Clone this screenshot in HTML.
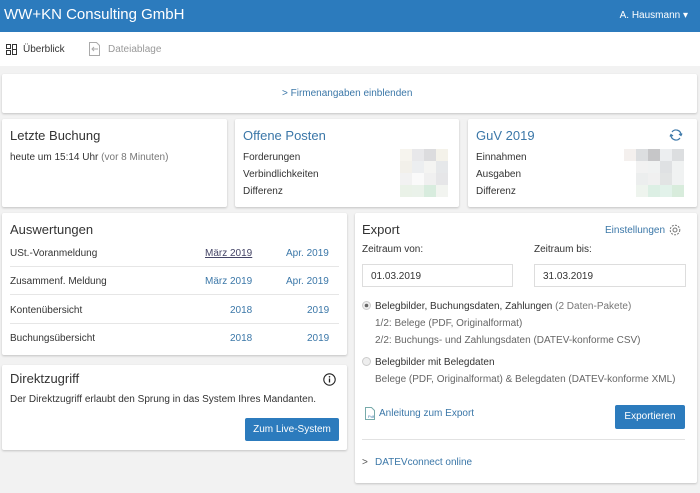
<!DOCTYPE html>
<html><head><meta charset="utf-8"><style>
*{box-sizing:border-box;margin:0;padding:0}
body{width:700px;height:493px;background:#f2f2f2;font-family:"Liberation Sans",sans-serif;font-size:10px;color:#333;position:relative;overflow:hidden}
.hdr{position:absolute;left:0;top:0;width:700px;height:32px;background:#2c7bbd;color:#fff}
.hdr .t{position:absolute;left:4px;top:6px;font-size:15px}
.hdr .u{position:absolute;right:12px;top:10px;font-size:10px}
.nav{position:absolute;left:0;top:32px;width:700px;height:34px;background:#fff}
.card{position:absolute;background:#fff;box-shadow:0 1px 2px rgba(0,0,0,.2);border-radius:2px}
.h{font-size:13px;color:#333;position:absolute}
.blue{color:#3b77a8}
.l{position:absolute;font-size:10px}
.row{position:absolute;left:8px;right:8px;height:28px;border-bottom:1px solid #e6e6e6;font-size:10px}
.row span{position:absolute;top:9px}
.btn{position:absolute;background:#2c7bbd;color:#fff;font-size:10px;border-radius:2px;text-align:center}
.inp{position:absolute;border:1px solid #ddd;height:23px;font-size:10px;padding:6px 8px;color:#333}
.px{position:absolute;display:grid;grid-template-columns:repeat(4,12px);grid-auto-rows:12px}
</style></head><body>
<div class="hdr"><div class="t">WW+KN Consulting GmbH</div><div class="u">A. Hausmann ▾</div></div>
<div class="nav">
<svg style="position:absolute;left:6px;top:12px" width="11" height="11" viewBox="0 0 11 11" fill="none" stroke="#333"><rect x=".5" y=".5" width="4" height="4"/><rect x=".5" y="6.5" width="4" height="4"/><rect x="6.5" y=".5" width="4" height="10"/><path d="M6.5 5.5h4"/></svg>
<span class="l" style="left:23px;top:12px;color:#333">Überblick</span>
<svg style="position:absolute;left:89px;top:10px" width="12" height="14" viewBox="0 0 12 14" fill="none" stroke="#aaa"><path d="M.5.5h7l3 3v10H.5z"/><path d="M3 7h6M5 5L3 7l2 2"/></svg>
<span class="l" style="left:108px;top:12px;color:#999">Dateiablage</span>
</div>
<div class="card" style="left:2px;top:74px;width:695px;height:39px"><span class="l blue" style="left:280px;top:14px">&gt; Firmenangaben einblenden</span></div>

<div class="card" style="left:2px;top:119px;width:225px;height:88px"><div class="h" style="left:8px;top:9px">Letzte Buchung</div><span class="l" style="left:8px;top:33px">heute um 15:14 Uhr <span style="color:#777">(vor 8 Minuten)</span></span></div>
<div class="card" style="left:235px;top:119px;width:224px;height:88px"><div class="h blue" style="left:8px;top:9px">Offene Posten</div>
<span class="l" style="left:8px;top:33px">Forderungen</span><span class="l" style="left:8px;top:50px">Verbindlichkeiten</span><span class="l" style="left:8px;top:67px">Differenz</span>
<div class="px" style="left:165px;top:30px"><i style="background:#f6f4ee"></i><i style="background:#e8e8ea"></i><i style="background:#dcdcde"></i><i style="background:#f4f2ea"></i><i style="background:#f2f0ea"></i><i style="background:#eceef0"></i><i style="background:#f4f4f2"></i><i style="background:#e6e8ea"></i><i style="background:#f2f2f2"></i><i style="background:#fafafa"></i><i style="background:#f0f0f0"></i><i style="background:#e6e6e8"></i><i style="background:#eaf2e8"></i><i style="background:#eaf2ea"></i><i style="background:#d8ecde"></i><i style="background:#f2f4f0"></i></div></div>
<div class="card" style="left:468px;top:119px;width:229px;height:88px"><div class="h blue" style="left:8px;top:9px">GuV 2019</div>
<svg style="position:absolute;left:201px;top:9px" width="14" height="14" viewBox="0 0 14 14" fill="none" stroke="#3b77a8" stroke-width="1.2"><path d="M3 4a5 5 0 0 1 9 3M11 10a5 5 0 0 1-9-3"/><path d="M12 3v4H8M2 11V7h4" stroke-width="0"/><path d="M10 6l2 1.5 1-2M4 8L2 6.5 1 8.5"/></svg>
<span class="l" style="left:8px;top:33px">Einnahmen</span><span class="l" style="left:8px;top:50px">Ausgaben</span><span class="l" style="left:8px;top:67px">Differenz</span>
<div class="px" style="left:156px;top:30px;grid-template-columns:repeat(5,12px)"><i style="background:#f4f0ee"></i><i style="background:#dcdee0"></i><i style="background:#c6c6c8"></i><i style="background:#eceef0"></i><i style="background:#dcdee0"></i><i style="background:#fff"></i><i style="background:#f2f2f2"></i><i style="background:#f0f2f2"></i><i style="background:#dfe1e3"></i><i style="background:#f0f2f2"></i><i style="background:#fff"></i><i style="background:#eceeee"></i><i style="background:#f0f0f0"></i><i style="background:#e2e4e4"></i><i style="background:#f0f2f2"></i><i style="background:#fff"></i><i style="background:#eef4ee"></i><i style="background:#dcefe4"></i><i style="background:#e2f2ea"></i><i style="background:#d8ecdc"></i></div></div>

<div class="card" style="left:2px;top:213px;width:345px;height:142px"><div class="h" style="left:8px;top:9px">Auswertungen</div>
<div class="row" style="top:26px"><span style="left:0">USt.-Voranmeldung</span><span style="left:195px;color:#446;text-decoration:underline">März 2019</span><span style="left:276px" class="blue">Apr. 2019</span></div>
<div class="row" style="top:54px"><span style="left:0">Zusammenf. Meldung</span><span style="left:195px" class="blue">März 2019</span><span style="left:276px" class="blue">Apr. 2019</span></div>
<div class="row" style="top:83px"><span style="left:0">Kontenübersicht</span><span style="left:220px" class="blue">2018</span><span style="left:297px" class="blue">2019</span></div>
<div class="row" style="top:111px;border:0"><span style="left:0">Buchungsübersicht</span><span style="left:220px" class="blue">2018</span><span style="left:297px" class="blue">2019</span></div></div>

<div class="card" style="left:2px;top:365px;width:345px;height:85px"><div class="h" style="left:8px;top:6px">Direktzugriff</div>
<svg style="position:absolute;left:321px;top:8px" width="13" height="13" viewBox="0 0 13 13"><circle cx="6.5" cy="6.5" r="5.7" fill="none" stroke="#222" stroke-width="1.1"/><path d="M6.5 5.5v4" stroke="#222" stroke-width="1.3"/><circle cx="6.5" cy="3.8" r=".8" fill="#222"/></svg>
<span class="l" style="left:8px;top:29px">Der Direktzugriff erlaubt den Sprung in das System Ihres Mandanten.</span>
<div class="btn" style="left:243px;top:53px;width:94px;height:23px;line-height:23px">Zum Live-System</div></div>

<div class="card" style="left:355px;top:213px;width:342px;height:270px"><div class="h" style="left:7px;top:9px">Export</div>
<span class="l blue" style="left:250px;top:12px">Einstellungen</span>
<svg style="position:absolute;left:314px;top:11px" width="12" height="12" viewBox="0 0 12 12" fill="none" stroke="#777"><circle cx="6" cy="6" r="2"/><circle cx="6" cy="6" r="4.8" stroke-dasharray="2 1.2"/></svg>
<span class="l" style="left:7px;top:31px">Zeitraum von:</span><span class="l" style="left:179px;top:31px">Zeitraum bis:</span>
<div class="inp" style="left:7px;top:51px;width:151px">01.03.2019</div><div class="inp" style="left:179px;top:51px;width:152px">31.03.2019</div>
<svg style="position:absolute;left:7px;top:88px" width="9" height="9"><circle cx="4.5" cy="4.5" r="4" fill="#eee" stroke="#ccc"/><circle cx="4.5" cy="4.5" r="1.8" fill="#666"/></svg>
<span class="l" style="left:20px;top:88px">Belegbilder, Buchungsdaten, Zahlungen <span style="color:#777">(2 Daten-Pakete)</span></span>
<span class="l" style="left:20px;top:105px;color:#666">1/2: Belege (PDF, Originalformat)</span>
<span class="l" style="left:20px;top:122px;color:#666">2/2: Buchungs- und Zahlungsdaten (DATEV-konforme CSV)</span>
<svg style="position:absolute;left:7px;top:144px" width="9" height="9"><circle cx="4.5" cy="4.5" r="4" fill="#eee" stroke="#ccc"/></svg>
<span class="l" style="left:20px;top:144px">Belegbilder mit Belegdaten</span>
<span class="l" style="left:20px;top:161px;color:#666">Belege (PDF, Originalformat) &amp; Belegdaten (DATEV-konforme XML)</span>
<svg style="position:absolute;left:10px;top:194px" width="11" height="13" viewBox="0 0 11 13" fill="none" stroke="#7aa"><path d="M.5.5h6l3 3v9H.5z"/><text x="3" y="11" font-size="4" fill="#3b77a8" stroke="none">Pdf</text></svg>
<span class="l blue" style="left:24px;top:195px">Anleitung zum Export</span>
<div class="btn" style="left:260px;top:192px;width:70px;height:24px;line-height:24px">Exportieren</div>
<div style="position:absolute;left:7px;right:12px;top:226px;border-top:1px solid #e2e2e2"></div>
<span class="l" style="left:7px;top:244px;color:#555">&gt;</span><span class="l blue" style="left:20px;top:244px">DATEVconnect online</span></div>
</body></html>
